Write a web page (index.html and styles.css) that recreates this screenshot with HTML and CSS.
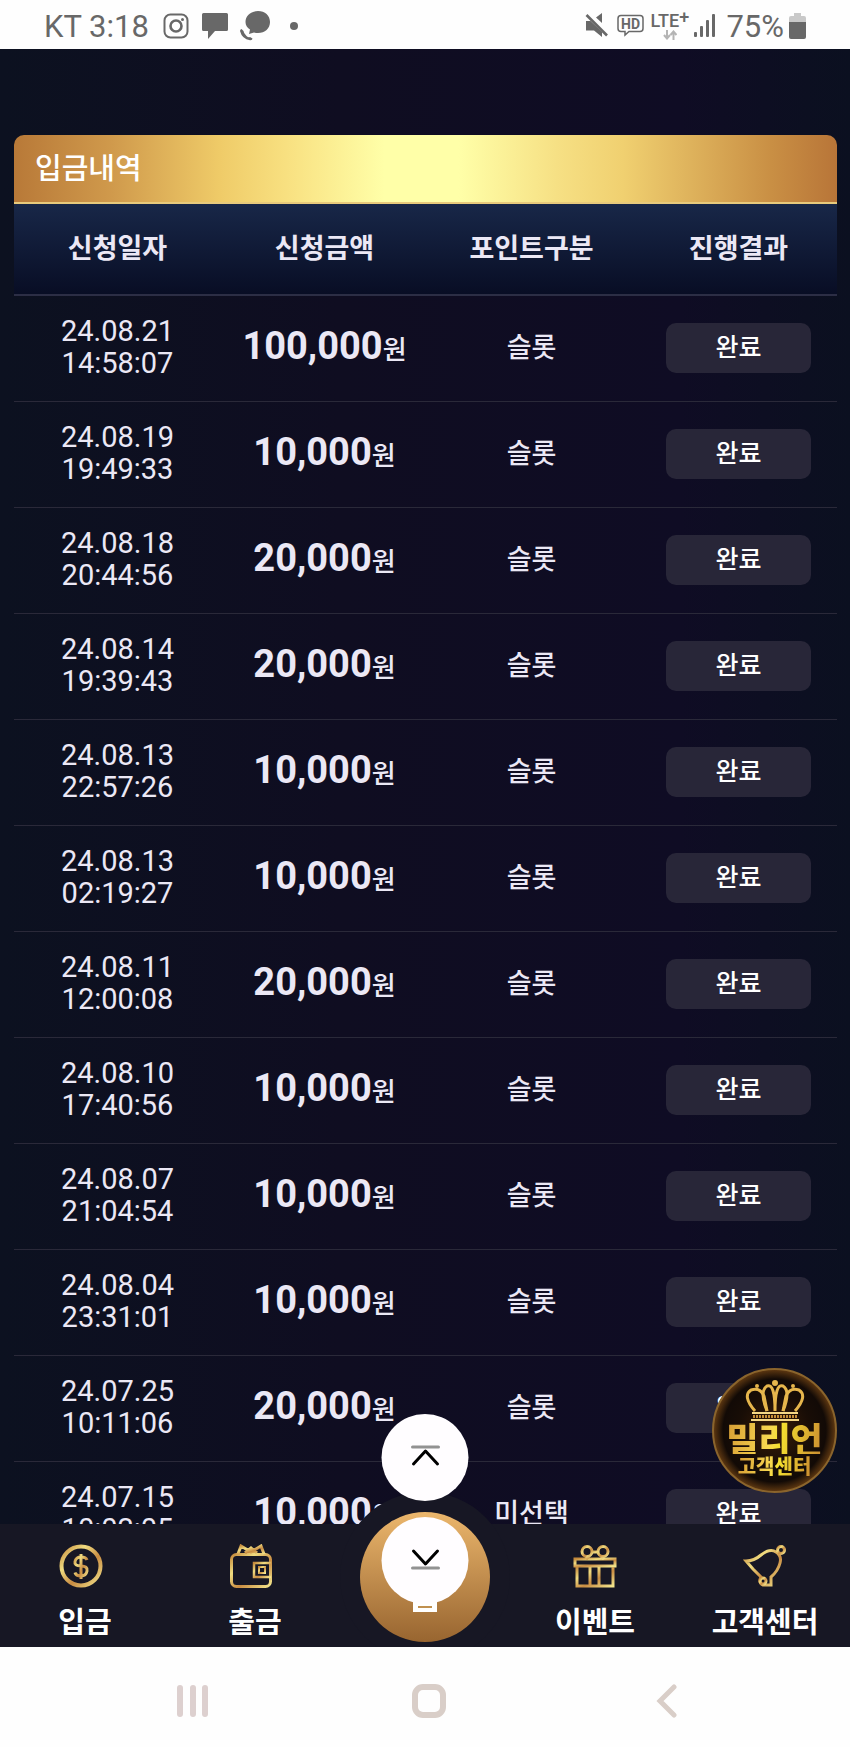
FILE: index.html
```
<!DOCTYPE html>
<html lang="ko">
<head>
<meta charset="UTF-8">
<meta name="viewport" content="width=device-width, initial-scale=1.0">
<title>입금내역</title>
<link rel="stylesheet" href="styles.css">
</head>
<body>

<header class="status-bar">
<span class="carrier">KT 3:18</span>
<svg class="insta" width="26" height="26" viewBox="0 0 26 26" fill="none" stroke="#686868"><rect x="1.5" y="1.5" width="23" height="23" rx="6" stroke-width="2"/><circle cx="13" cy="13" r="5.5" stroke-width="2.6"/><circle cx="19.5" cy="6.5" r="1.5" fill="#686868" stroke="none"/></svg>
<svg class="chat" width="26" height="26" viewBox="0 0 26 26" fill="#686868"><path d="M1.5 0h23q1.5 0 1.5 1.5v15q0 1.5-1.5 1.5H13l-7 8v-8H1.5Q0 18 0 16.5v-15Q0 0 1.5 0z"/></svg>
<svg class="call" width="30" height="30" viewBox="0 0 30 30" fill="#686868"><path d="M18 0C25 0 30 4.5 30 11s-5 11-12 11q-2 0-4-.5L9 23l1-4.5C7 17 5.500 14 5.500 11 5.500 4.500 11 0 18 0z"/><path d="M1.500 18l2 2q0 2 3 5 2 2 3.500 1l2.500 1.500q0 2-2.500 1.800Q2 28 0 20q0-1.500 1.500-2z"/></svg>
<span class="dot"></span>
<span class="spacer"></span>
<svg class="mute" width="24" height="25" viewBox="0 0 24 25" fill="#686868"><path d="M1 8h4.500L17 19v5l-8-6.500H1z"/><path d="M17 0v10l-6-5.500z"/><path d="M1.500 2L22 22.500" stroke="#686868" stroke-width="2.600"/></svg>
<svg class="hd" width="28" height="24" viewBox="0 0 28 24"><path d="M4 1.500h19q3 0 3 3v10q0 3-3 3H12l-4 3.500v-3.500H4q-3 0-3-3v-10q0-3 3-3z" fill="none" stroke="#686868" stroke-width="1.500"/><text x="13.500" y="14.500" text-anchor="middle" class="hd-text">HD</text></svg>
<span class="lte"><span class="lte-text">LTE<sup>+</sup></span><svg width="14" height="10" viewBox="0 0 14 10" fill="none" stroke="#b4b4b4" stroke-width="2"><path d="M4 0v8M1 5l3 3.500L7 5M10.500 10V2M7.500 5l3-3.500 3 3.500"/></svg></span>
<svg class="signal" width="24" height="24" viewBox="0 0 24 24" fill="#686868"><rect x="0" y="18" width="3" height="5" rx="1"/><rect x="6" y="12" width="3" height="11" rx="1"/><rect x="12" y="6" width="3" height="17" rx="1"/><rect x="18" y="0" width="3" height="23" rx="1"/></svg>
<span class="battery-text">75%</span>
<svg class="battery" width="17" height="26" viewBox="0 0 17 26"><path d="M5 0h7v3h3q2 0 2 2v5H0V5q0-2 2-2h3z" fill="#c9c9c9"/><path d="M0 9h17v15q0 2-2 2H2q-2 0-2-2z" fill="#686868"/></svg>
</header>

<main class="screen">
<section class="panel">
<h1 class="panel-title">입금내역</h1>
<table class="history">
<thead>
<tr><th>신청일자</th><th>신청금액</th><th>포인트구분</th><th>진행결과</th></tr>
</thead>
<tbody>
<tr><td class="date">24.08.21<br>14:58:07</td><td class="amount"><b>100,000</b>원</td><td>슬롯</td><td><button class="state">완료</button></td></tr>
<tr><td class="date">24.08.19<br>19:49:33</td><td class="amount"><b>10,000</b>원</td><td>슬롯</td><td><button class="state">완료</button></td></tr>
<tr><td class="date">24.08.18<br>20:44:56</td><td class="amount"><b>20,000</b>원</td><td>슬롯</td><td><button class="state">완료</button></td></tr>
<tr><td class="date">24.08.14<br>19:39:43</td><td class="amount"><b>20,000</b>원</td><td>슬롯</td><td><button class="state">완료</button></td></tr>
<tr><td class="date">24.08.13<br>22:57:26</td><td class="amount"><b>10,000</b>원</td><td>슬롯</td><td><button class="state">완료</button></td></tr>
<tr><td class="date">24.08.13<br>02:19:27</td><td class="amount"><b>10,000</b>원</td><td>슬롯</td><td><button class="state">완료</button></td></tr>
<tr><td class="date">24.08.11<br>12:00:08</td><td class="amount"><b>20,000</b>원</td><td>슬롯</td><td><button class="state">완료</button></td></tr>
<tr><td class="date">24.08.10<br>17:40:56</td><td class="amount"><b>10,000</b>원</td><td>슬롯</td><td><button class="state">완료</button></td></tr>
<tr><td class="date">24.08.07<br>21:04:54</td><td class="amount"><b>10,000</b>원</td><td>슬롯</td><td><button class="state">완료</button></td></tr>
<tr><td class="date">24.08.04<br>23:31:01</td><td class="amount"><b>10,000</b>원</td><td>슬롯</td><td><button class="state">완료</button></td></tr>
<tr><td class="date">24.07.25<br>10:11:06</td><td class="amount"><b>20,000</b>원</td><td>슬롯</td><td><button class="state">완료</button></td></tr>
<tr><td class="date">24.07.15<br>10:02:05</td><td class="amount"><b>10,000</b>원</td><td>미선택</td><td><button class="state">완료</button></td></tr>
</tbody>
</table>
</section>

<nav class="tab-bar">
<svg width="0" height="0" class="defs"><defs><linearGradient id="gold" x1="0" y1="0" x2="1" y2="1"><stop offset="0" stop-color="#c58a3c"/><stop offset=".3" stop-color="#f0dc80"/><stop offset=".6" stop-color="#c98c42"/><stop offset="1" stop-color="#f3e58c"/></linearGradient></defs></svg>
<a href="#" class="tab"><svg class="tab-icon shift" viewBox="0 0 44 44"><circle cx="22" cy="22" r="19.500" stroke-width="4"/><path d="M28 16q-1-3-6-3t-6 4.500 6 4.500 6 5-6 5-6-3.500M22 10v25"/></svg>입금</a>
<a href="#" class="tab"><svg class="tab-icon shift" viewBox="0 0 44 44"><rect x="2.500" y="10.500" width="39" height="32" rx="5"/><path d="M9 10l3-8 10 6 10-6 3 8M16 9l6-5 6 5"/><path d="M42 19H25v14h17" stroke-width="2.500"/><rect x="30" y="23" width="6" height="6" stroke-width="2"/></svg>출금</a>
<a href="#" class="home" aria-label="홈"><svg width="24" height="12" viewBox="0 0 24 12"><path d="M0 0h24v12H0z" fill="#fff"/><path d="M5 7h14" stroke="#c09050" stroke-width="2"/></svg></a>
<a href="#" class="tab"><svg class="tab-icon" viewBox="0 0 44 44"><rect x="2" y="15" width="40" height="7"/><path d="M4 23v19h36V23M17 23v19M26 23v19"/><circle cx="14" cy="7.500" r="5"/><circle cx="30" cy="7.500" r="5"/><path d="M19 8h6M16 12l-3 3M28 12l3 3"/></svg>이벤트</a>
<a href="#" class="tab"><svg class="tab-icon" viewBox="0 0 44 44"><path d="M3 17q8 0 15-6 9-7 15-3 6 4 4 11-2 8-9 14v8H20q-5-2-2-8L10 25z"/><circle cx="38" cy="6" r="3.500"/><circle cx="20" cy="37" r="3"/></svg>고객센터</a>
</nav>

<div class="scroll-buttons">
<button class="scroll-btn" aria-label="맨 위로"><svg width="30" height="22" viewBox="0 0 30 22" fill="none" stroke-linecap="round"><path d="M2 2h26" stroke="#929292" stroke-width="3"/><path d="M3 19L15 6l12 13" stroke="#000" stroke-width="3" stroke-linejoin="round"/></svg></button>
<button class="scroll-btn" aria-label="맨 아래로"><svg width="30" height="22" viewBox="0 0 30 22" fill="none" stroke-linecap="round"><path d="M2 20h26" stroke="#929292" stroke-width="3"/><path d="M3 3l12 13L27 3" stroke="#000" stroke-width="3" stroke-linejoin="round"/></svg></button>
</div>

<a href="#" class="badge">
<svg class="crown" width="60" height="42" viewBox="0 0 60 42" fill="none" stroke="#e6b64c" stroke-width="3"><path d="M10 31Q-3 16 6 10q9-3 13 6l3 15M50 31Q63 16 54 10q-9-3-13 6l-3 15"/><path d="M22 31q-8-20 0-25 8-3 8 25 0-28 8-25 8 5 0 25"/><circle cx="30" cy="3" r="1.500"/><circle cx="12" cy="6" r="1" stroke-width="2"/><circle cx="48" cy="6" r="1" stroke-width="2"/><path d="M7 33h46M6 40h48" stroke="#f5d886" stroke-width="2"/><path d="M8 36.500h44" stroke="#c58e38" stroke-dasharray="2 1"/></svg>
<strong>밀리언</strong>
<span>고객센터</span>
</a>
</main>

<footer class="system-nav">
<button aria-label="최근 앱"><svg width="32" height="34" viewBox="0 0 32 34" stroke="#ddd0cf" stroke-width="6" stroke-linecap="round"><path d="M3 4v26M16 4v26M28 4v26"/></svg></button>
<button aria-label="홈"><svg width="36" height="36" viewBox="0 0 36 36" fill="none" stroke="#d9cec8" stroke-width="6"><rect x="4" y="4" width="28" height="28" rx="8"/></svg></button>
<button aria-label="뒤로"><svg width="22" height="34" viewBox="0 0 22 34" fill="none" stroke="#d9cec8" stroke-width="5" stroke-linecap="round"><path d="M18 3L4 17l14 14"/></svg></button>
</footer>

</body>
</html>
```
FILE: styles.css
```
* {
box-sizing: border-box;
}
body {
margin: 0;
height: 100vh;
display: flex;
flex-direction: column;
font-family: "Noto Sans CJK KR", sans-serif;
background: #fefefe;
}
button {
border: none;
padding: 0;
font-family: inherit;
cursor: pointer;
}
a {
color: inherit;
text-decoration: none;
}
.status-bar {
height: 49px;
flex: none;
display: flex;
align-items: center;
padding: 2px 44px 0 44px;
color: #686868;
font-family: Roboto, sans-serif;
font-size: 31px;
}
.carrier {
padding-top: 2px;
}
.insta {
margin-left: 14px;
}
.chat {
margin-left: 13px;
}
.call {
margin-left: 12px;
}
.dot {
width: 8px;
height: 8px;
margin-left: 20px;
border-radius: 50%;
background: #686868;
}
.spacer {
flex: 1;
}
.hd {
margin-left: 8px;
}
.hd-text {
font: 700 14px Roboto, sans-serif;
fill: #686868;
}
.lte {
display: flex;
flex-direction: column;
align-items: center;
width: 41px;
height: 30px;
margin-left: 4px;
font-size: 18px;
font-weight: 500;
}
.lte-text {
line-height: 19px;
white-space: nowrap;
}
.lte sup {
font-size: 18px;
line-height: 0;
vertical-align: 4px;
}
.lte svg {
flex: none;
}
.signal {
margin-left: 4px;
}
.battery-text {
margin-left: 8px;
padding-top: 2px;
}
.battery {
margin-left: 5px;
}
.screen {
flex: 1;
min-height: 0;
position: relative;
overflow: hidden;
padding: 86px 13px 0 14px;
color: #ebe8f5;
background: linear-gradient(90deg, #0c1120, #0f0d21 40%, #0f0c24 80%, #0b1020);
}
.panel {
overflow: hidden;
border-radius: 10px 10px 0 0;
}
.panel-title {
height: 69px;
margin: 0;
padding-left: 21px;
border-bottom: 2px solid #e8ca7c;
background: linear-gradient(90deg, #b87938, #d09a4c 12%, #efcb68 25%, #f8e080 33%, #ffffa8 45%, #ffffa8 54%, #f6e084 66%, #f0d070 74%, #c98f44 92%, #b87538);
color: #fff;
font-size: 29px;
font-weight: 500;
line-height: 62px;
}
.history {
width: calc(100% + 5px);
table-layout: fixed;
border-collapse: collapse;
text-align: center;
font-size: 27px;
font-weight: 500;
}
.history thead {
background: linear-gradient(#182748, #080d24);
}
.history th {
height: 91px;
padding: 0 0 6px;
border-bottom: 2px solid #2c2e45;
font-weight: 700;
}
.history td {
height: 106px;
padding: 0 0 6px;
border-bottom: 1px solid #2a2939;
}
.history .date {
padding-bottom: 2px;
font-family: Roboto, sans-serif;
font-size: 29px;
font-weight: 400;
line-height: 32px;
}
.history .amount {
padding-bottom: 4px;
font-size: 26px;
}
.amount b {
font-family: Roboto, sans-serif;
font-size: 38px;
font-weight: 700;
}
.history td:last-child {
padding: 0;
}
.state {
width: 145px;
height: 50px;
padding-bottom: 6px;
border-radius: 10px;
background: #282638;
color: #fff;
font-size: 25px;
font-weight: 500;
line-height: 44px;
vertical-align: middle;
}
.tab-bar {
position: absolute;
left: 0;
right: 0;
bottom: 0;
height: 123px;
display: grid;
grid-template-columns: repeat(5, 1fr);
grid-template-rows: 100%;
background: #171724;
color: #fff;
}
.defs {
position: absolute;
}
.tab {
display: flex;
flex-direction: column;
align-items: center;
padding-top: 20px;
font-size: 29px;
font-weight: 700;
line-height: 34px;
white-space: nowrap;
}
.tab-icon {
width: 44px;
height: 44px;
margin-bottom: 15px;
fill: none;
stroke: url(#gold);
stroke-width: 3px;
}
.shift {
margin-right: 8px;
}
.home {
position: relative;
justify-self: center;
align-self: end;
width: 130px;
height: 130px;
margin-bottom: 5px;
border-radius: 50%;
background: linear-gradient(#ebb66c, #986530);
box-shadow: 0 0 0 20px #171724;
}
.home svg {
position: absolute;
left: 53px;
bottom: 30px;
}
.scroll-buttons {
position: absolute;
left: 50%;
bottom: 43px;
display: flex;
flex-direction: column;
gap: 16px;
transform: translateX(-50%);
}
.scroll-btn {
width: 87px;
height: 87px;
border-radius: 50%;
background: #fffdff;
}
.badge {
position: absolute;
right: 13px;
bottom: 154px;
width: 125px;
height: 125px;
display: flex;
flex-direction: column;
align-items: center;
padding-top: 10px;
border: 2px solid #8a642c;
border-radius: 50%;
background: radial-gradient(closest-side, #3a1d08, #180d06 60%, #120a06 85%, #5a3510);
}
.crown {
flex: none;
}
.badge strong,
.badge span {
background: linear-gradient(100deg, #d69c34, #f8d850 45%, #f5e030 55%, #c98a30);
background-clip: text;
color: transparent;
font-weight: 900;
white-space: nowrap;
}
.badge strong {
font-size: 35px;
line-height: 32px;
}
.badge span {
font-size: 20px;
line-height: 24px;
}
.system-nav {
height: 100px;
flex: none;
display: flex;
align-items: center;
justify-content: space-between;
padding: 8px 172px 0 177px;
}
.system-nav button {
display: flex;
background: none;
}
.system-nav button:nth-child(2) {
margin-right: 8px;
}
```
